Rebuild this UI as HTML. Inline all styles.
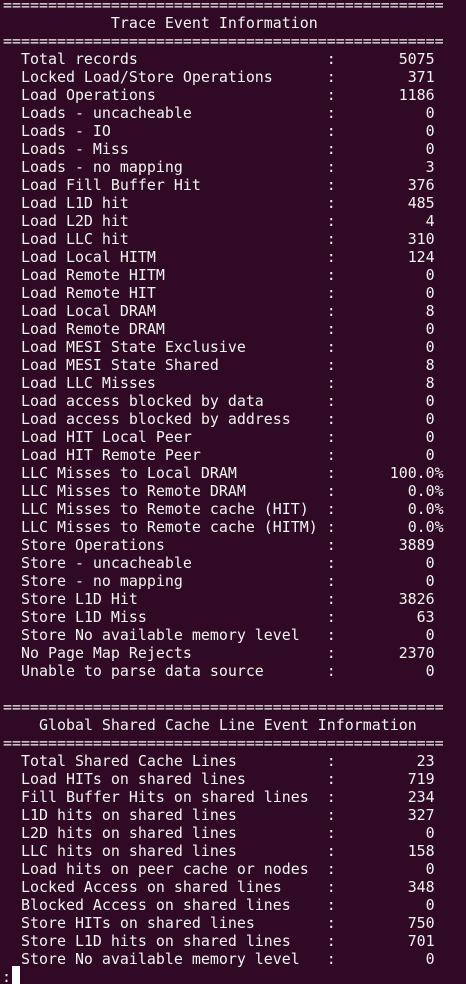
<!DOCTYPE html>
<html><head><meta charset="utf-8"><style>
html,body{margin:0;padding:0;background:#300a24;width:466px;height:984px;overflow:hidden}
body{position:relative;font-family:"DejaVu Sans Mono","Liberation Mono",monospace;font-size:14.95px;color:#f2f2f2}
.r{position:absolute;left:3px;height:18px;line-height:18px;white-space:pre;width:460px;margin-top:1px}
.l{position:absolute;left:2ch}
.c{position:absolute;left:36ch}
.v{position:absolute;right:calc(100% - 48ch)}
.p{position:absolute;right:calc(100% - 49ch)}
.cur{position:absolute;left:12px;top:966px;width:8px;height:18px;background:#fff}
</style></head><body>
<div class="r" style="top:-5px">=================================================</div>
<div class="r" style="top:13px">            Trace Event Information</div>
<div class="r" style="top:31px">=================================================</div>
<div class="r" style="top:49px"><span class="l">Total records</span><span class="c">:</span><span class="v">5075</span></div>
<div class="r" style="top:67px"><span class="l">Locked Load/Store Operations</span><span class="c">:</span><span class="v">371</span></div>
<div class="r" style="top:85px"><span class="l">Load Operations</span><span class="c">:</span><span class="v">1186</span></div>
<div class="r" style="top:103px"><span class="l">Loads - uncacheable</span><span class="c">:</span><span class="v">0</span></div>
<div class="r" style="top:121px"><span class="l">Loads - IO</span><span class="c">:</span><span class="v">0</span></div>
<div class="r" style="top:139px"><span class="l">Loads - Miss</span><span class="c">:</span><span class="v">0</span></div>
<div class="r" style="top:157px"><span class="l">Loads - no mapping</span><span class="c">:</span><span class="v">3</span></div>
<div class="r" style="top:175px"><span class="l">Load Fill Buffer Hit</span><span class="c">:</span><span class="v">376</span></div>
<div class="r" style="top:193px"><span class="l">Load L1D hit</span><span class="c">:</span><span class="v">485</span></div>
<div class="r" style="top:211px"><span class="l">Load L2D hit</span><span class="c">:</span><span class="v">4</span></div>
<div class="r" style="top:229px"><span class="l">Load LLC hit</span><span class="c">:</span><span class="v">310</span></div>
<div class="r" style="top:247px"><span class="l">Load Local HITM</span><span class="c">:</span><span class="v">124</span></div>
<div class="r" style="top:265px"><span class="l">Load Remote HITM</span><span class="c">:</span><span class="v">0</span></div>
<div class="r" style="top:283px"><span class="l">Load Remote HIT</span><span class="c">:</span><span class="v">0</span></div>
<div class="r" style="top:301px"><span class="l">Load Local DRAM</span><span class="c">:</span><span class="v">8</span></div>
<div class="r" style="top:319px"><span class="l">Load Remote DRAM</span><span class="c">:</span><span class="v">0</span></div>
<div class="r" style="top:337px"><span class="l">Load MESI State Exclusive</span><span class="c">:</span><span class="v">0</span></div>
<div class="r" style="top:355px"><span class="l">Load MESI State Shared</span><span class="c">:</span><span class="v">8</span></div>
<div class="r" style="top:373px"><span class="l">Load LLC Misses</span><span class="c">:</span><span class="v">8</span></div>
<div class="r" style="top:391px"><span class="l">Load access blocked by data</span><span class="c">:</span><span class="v">0</span></div>
<div class="r" style="top:409px"><span class="l">Load access blocked by address</span><span class="c">:</span><span class="v">0</span></div>
<div class="r" style="top:427px"><span class="l">Load HIT Local Peer</span><span class="c">:</span><span class="v">0</span></div>
<div class="r" style="top:445px"><span class="l">Load HIT Remote Peer</span><span class="c">:</span><span class="v">0</span></div>
<div class="r" style="top:463px"><span class="l">LLC Misses to Local DRAM</span><span class="c">:</span><span class="p">100.0%</span></div>
<div class="r" style="top:481px"><span class="l">LLC Misses to Remote DRAM</span><span class="c">:</span><span class="p">0.0%</span></div>
<div class="r" style="top:499px"><span class="l">LLC Misses to Remote cache (HIT)</span><span class="c">:</span><span class="p">0.0%</span></div>
<div class="r" style="top:517px"><span class="l">LLC Misses to Remote cache (HITM)</span><span class="c">:</span><span class="p">0.0%</span></div>
<div class="r" style="top:535px"><span class="l">Store Operations</span><span class="c">:</span><span class="v">3889</span></div>
<div class="r" style="top:553px"><span class="l">Store - uncacheable</span><span class="c">:</span><span class="v">0</span></div>
<div class="r" style="top:571px"><span class="l">Store - no mapping</span><span class="c">:</span><span class="v">0</span></div>
<div class="r" style="top:589px"><span class="l">Store L1D Hit</span><span class="c">:</span><span class="v">3826</span></div>
<div class="r" style="top:607px"><span class="l">Store L1D Miss</span><span class="c">:</span><span class="v">63</span></div>
<div class="r" style="top:625px"><span class="l">Store No available memory level</span><span class="c">:</span><span class="v">0</span></div>
<div class="r" style="top:643px"><span class="l">No Page Map Rejects</span><span class="c">:</span><span class="v">2370</span></div>
<div class="r" style="top:661px"><span class="l">Unable to parse data source</span><span class="c">:</span><span class="v">0</span></div>
<div class="r" style="top:697px">=================================================</div>
<div class="r" style="top:715px">    Global Shared Cache Line Event Information</div>
<div class="r" style="top:733px">=================================================</div>
<div class="r" style="top:751px"><span class="l">Total Shared Cache Lines</span><span class="c">:</span><span class="v">23</span></div>
<div class="r" style="top:769px"><span class="l">Load HITs on shared lines</span><span class="c">:</span><span class="v">719</span></div>
<div class="r" style="top:787px"><span class="l">Fill Buffer Hits on shared lines</span><span class="c">:</span><span class="v">234</span></div>
<div class="r" style="top:805px"><span class="l">L1D hits on shared lines</span><span class="c">:</span><span class="v">327</span></div>
<div class="r" style="top:823px"><span class="l">L2D hits on shared lines</span><span class="c">:</span><span class="v">0</span></div>
<div class="r" style="top:841px"><span class="l">LLC hits on shared lines</span><span class="c">:</span><span class="v">158</span></div>
<div class="r" style="top:859px"><span class="l">Load hits on peer cache or nodes</span><span class="c">:</span><span class="v">0</span></div>
<div class="r" style="top:877px"><span class="l">Locked Access on shared lines</span><span class="c">:</span><span class="v">348</span></div>
<div class="r" style="top:895px"><span class="l">Blocked Access on shared lines</span><span class="c">:</span><span class="v">0</span></div>
<div class="r" style="top:913px"><span class="l">Store HITs on shared lines</span><span class="c">:</span><span class="v">750</span></div>
<div class="r" style="top:931px"><span class="l">Store L1D hits on shared lines</span><span class="c">:</span><span class="v">701</span></div>
<div class="r" style="top:949px"><span class="l">Store No available memory level</span><span class="c">:</span><span class="v">0</span></div>
<div class="r" style="top:967px;left:2px">:</div>
<div class="cur"></div>
</body></html>
